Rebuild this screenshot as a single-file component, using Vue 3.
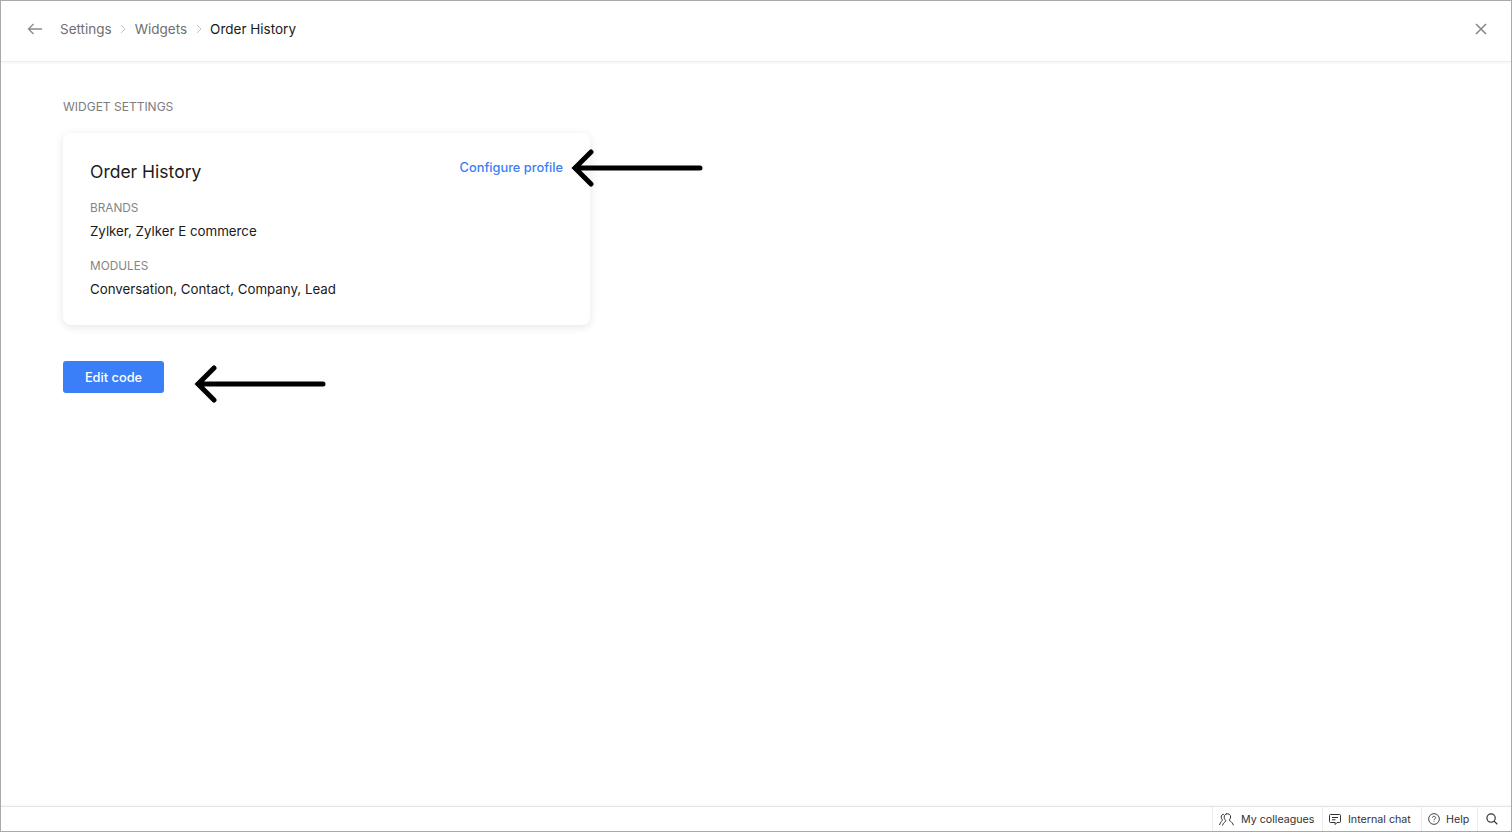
<template>
  <div class="window">
    <header class="topbar">
      <div class="crumbs">
        <svg class="back" width="16" height="12" viewBox="0 0 16 12" fill="none" stroke="currentColor" stroke-width="1.3">
          <path d="M15 6H1.500M6.500 1 1.500 6l5 5"></path>
        </svg>
        <span class="crumb">Settings</span>
        <svg class="sep" width="6" height="10" viewBox="0 0 6 10" fill="none" stroke="currentColor" stroke-width="1">
          <path d="m1 1 4 4-4 4"></path>
        </svg>
        <span class="crumb">Widgets</span>
        <svg class="sep" width="6" height="10" viewBox="0 0 6 10" fill="none" stroke="currentColor" stroke-width="1">
          <path d="m1 1 4 4-4 4"></path>
        </svg>
        <span class="crumb current">Order History</span>
      </div>
      <svg class="close" width="12" height="12" viewBox="0 0 12 12" fill="none" stroke="currentColor" stroke-width="1.500">
        <path d="m1 1 10 10M11 1 1 11"></path>
      </svg>
    </header>

    <main class="content">
      <h2 class="section-title">WIDGET SETTINGS</h2>

      <section class="card">
        <div class="card-head">
          <h3 class="card-title">Order History</h3>
          <a class="configure">Configure profile</a>
          <svg class="arrow arrow-top" width="134" height="38" viewBox="0 0 134 38" fill="none" stroke="#000" stroke-width="5" stroke-linecap="round">
            <path d="M129 19H5M20 3 4 19l16 16"></path>
          </svg>
        </div>
        <div v-for="field in fields" :key="field.label" class="field">
          <div class="field-label">{{ field.label }}</div>
          <div class="field-value">{{ field.value }}</div>
        </div>
      </section>

      <div class="actions">
        <button class="edit-btn">Edit code</button>
        <svg class="arrow arrow-bottom" width="134" height="38" viewBox="0 0 134 38" fill="none" stroke="#000" stroke-width="5" stroke-linecap="round">
          <path d="M129 19H5M20 3 4 19l16 16"></path>
        </svg>
      </div>
    </main>

    <footer class="statusbar">
      <div class="status-item colleagues">
        <svg width="15" height="13" viewBox="0 0 15 13" fill="none" stroke="currentColor" stroke-width="1">
          <path d="M7 .9c2.600-.6 4.600.6 4.600 3.100 0 1.400-.7 2.500-1.600 3.100.1.600 2.800 1 4.500 5.200"></path>
          <path d="M3.500 12.500c.7-2.700 2.400-3.700 3.300-4.400.1-.4 0-.6-.3-1-.8-.8-1.400-1.800-1.300-3.100C5.300 2.200 6.400.9 7.900.9"></path>
          <path d="M4.900 1.300C3.300 1.200 2.200 2.400 2.200 4c0 1.300.6 2.300 1.400 3C3.600 7.700 1.400 8.400.5 12"></path>
        </svg>
        <span>My colleagues</span>
      </div>
      <div class="status-item chat">
        <svg width="12" height="13" viewBox="0 0 12 13" fill="none" stroke="currentColor" stroke-width="1">
          <path d="M1.500 1.500h9a1 1 0 0 1 1 1v6a1 1 0 0 1-1 1H8l-1.800 2V9.500H1.500a1 1 0 0 1-1-1v-6a1 1 0 0 1 1-1Z"></path>
          <path d="M3 4.500h6M3 6.800h3.500"></path>
        </svg>
        <span>Internal chat</span>
      </div>
      <div class="status-item help">
        <svg width="12" height="12" viewBox="0 0 13 13" fill="none" stroke="currentColor" stroke-width="1">
          <circle cx="6.500" cy="6.500" r="5.800"></circle>
          <path d="M4.800 5.200c0-1 .8-1.600 1.700-1.600s1.700.6 1.700 1.500c0 1.300-1.700 1.300-1.700 2.600M6.500 9v.8"></path>
        </svg>
        <span>Help</span>
      </div>
      <div class="status-item search">
        <svg width="12" height="12" viewBox="0 0 13 13" fill="none" stroke="currentColor" stroke-width="1.300">
          <circle cx="5.500" cy="5.500" r="4.500"></circle>
          <path d="m8.800 8.800 3.400 3.400"></path>
        </svg>
      </div>
    </footer>
  </div>
</template>

<script setup>
const fields = [
  { label: 'BRANDS', value: 'Zylker, Zylker E commerce' },
  { label: 'MODULES', value: 'Conversation, Contact, Company, Lead' }
]
</script>

<style>
html,
body {
  margin: 0;
  background: #fff;
}
</style>

<style scoped>
.window {
  box-sizing: border-box;
  width: 1512px;
  height: 832px;
  display: flex;
  flex-direction: column;
  border: 1px solid #a9a9a9;
  background: #fff;
  font-family: Inter, "Noto Sans", sans-serif;
  color: #111;
  overflow: hidden;
}

.topbar {
  box-sizing: border-box;
  height: 61px;
  flex-shrink: 0;
  display: flex;
  align-items: center;
  justify-content: space-between;
  padding: 0 24px 5px 26px;
  border-bottom: 1px solid #eeeeee;
  box-shadow: 0 1px 3px rgba(0, 0, 0, 0.05);
}

.crumbs {
  display: flex;
  align-items: center;
}

.back {
  color: #8a8a8a;
  margin-right: 17px;
}

.crumb {
  font-size: 13.500px;
  color: #6f6f6f;
}

.crumb.current {
  color: #1a1a1a;
}

.sep {
  color: #c4c4c4;
  margin: 0 8.500px;
}

.close {
  color: #858585;
}

.content {
  flex: 1;
  padding: 37px 62px 0;
}

.section-title {
  margin: 0 0 19px;
  font-size: 12px;
  line-height: 15px;
  font-weight: 400;
  color: #7c7c7c;
}

.card {
  box-sizing: border-box;
  width: 527px;
  height: 192px;
  padding: 25px 27px;
  border-radius: 8px;
  background: #fff;
  box-shadow: 0 2px 10px rgba(0, 0, 0, 0.1);
}

.card-head {
  position: relative;
  display: flex;
  justify-content: space-between;
  align-items: flex-start;
  margin-bottom: 15px;
}

.card-title {
  margin: 0;
  font-size: 17.500px;
  line-height: 28px;
  font-weight: 400;
  color: #1a1a1a;
}

.configure {
  font-size: 12.800px;
  line-height: 20px;
  font-weight: 500;
  color: #3a7ef8;
}

.arrow {
  position: absolute;
}

.arrow-top {
  left: 481px;
  top: -9px;
}

.field {
  margin-bottom: 18px;
}

.field-label {
  font-size: 11.800px;
  line-height: 14px;
  color: #858585;
  margin-bottom: 6px;
}

.field-value {
  font-size: 13.300px;
  line-height: 20px;
  color: #1a1a1a;
}

.actions {
  position: relative;
  margin-top: 36px;
}

.edit-btn {
  width: 101px;
  height: 32px;
  border: none;
  border-radius: 3px;
  background: #3a7ef8;
  color: #fff;
  font-family: inherit;
  font-size: 12.800px;
  font-weight: 500;
}

.arrow-bottom {
  left: 131px;
  top: 4px;
}

.statusbar {
  height: 24px;
  flex-shrink: 0;
  display: flex;
  justify-content: flex-end;
  border-top: 1px solid #e4e4e4;
  box-shadow: 0 -1px 2px rgba(0, 0, 0, 0.04);
  font-size: 10.700px;
  color: #333;
}

.status-item {
  box-sizing: border-box;
  display: flex;
  align-items: center;
  gap: 7px;
  padding-left: 6px;
  border-left: 1px solid #ececec;
}

.colleagues {
  width: 110px;
}

.chat {
  width: 99px;
}

.help {
  width: 56px;
  gap: 6px;
}

.status-item.search {
  width: 34px;
  padding-left: 8px;
}
</style>
